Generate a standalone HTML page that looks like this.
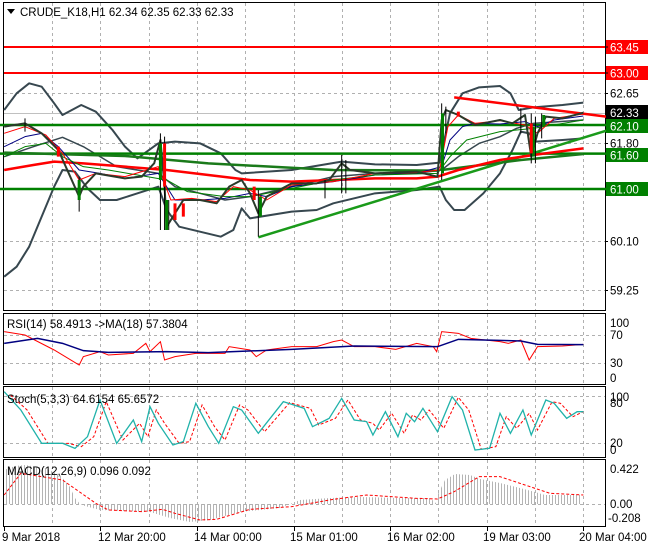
<!DOCTYPE html>
<html><head><meta charset="utf-8"><style>
body{margin:0;background:#fff;}
svg{display:block;font-family:"Liberation Sans",sans-serif;font-size:11px;}
</style></head><body>
<svg width="650" height="550" viewBox="0 0 650 550" xmlns="http://www.w3.org/2000/svg">
<defs>
<pattern id="hist" width="3" height="10" patternUnits="userSpaceOnUse"><rect x="0" y="0" width="1" height="10" fill="#b4b4b4"/></pattern>
</defs>
<rect width="650" height="550" fill="#fff"/>
<g fill="none" stroke="#000" stroke-width="1">
<rect x="3.5" y="2.5" width="602" height="308"/>
<rect x="3.5" y="313.5" width="602" height="71"/>
<rect x="3.5" y="386.5" width="602" height="71"/>
<rect x="3.5" y="459.5" width="602" height="67"/>
</g>
<g stroke="#b0b0b0" stroke-dasharray="3,3" stroke-width="1">
<path d="M52.5 3V310M100.5 3V310M149.5 3V310M197.5 3V310M245.5 3V310M294.5 3V310M342.5 3V310M390.5 3V310M438.5 3V310M487.5 3V310M535.5 3V310M583.5 3V310"/>
<path d="M52.5 314V384M100.5 314V384M149.5 314V384M197.5 314V384M245.5 314V384M294.5 314V384M342.5 314V384M390.5 314V384M438.5 314V384M487.5 314V384M535.5 314V384M583.5 314V384"/>
<path d="M52.5 387V457M100.5 387V457M149.5 387V457M197.5 387V457M245.5 387V457M294.5 387V457M342.5 387V457M390.5 387V457M438.5 387V457M487.5 387V457M535.5 387V457M583.5 387V457"/>
<path d="M52.5 460V526M100.5 460V526M149.5 460V526M197.5 460V526M245.5 460V526M294.5 460V526M342.5 460V526M390.5 460V526M438.5 460V526M487.5 460V526M535.5 460V526M583.5 460V526"/>
<path d="M4 93.5H605M4 143.5H605M4 241.5H605M4 290.5H605"/>
<path d="M4 335.5H605M4 363.5H605M4 396.5H605M4 443.5H605M4 504.5H605"/>
</g>
<line x1="4" y1="113.5" x2="605" y2="113.5" stroke="#c0c0c0"/>
<g transform="scale(0.41667,0.33333)" fill="none" stroke-linejoin="round">
<path vector-effect="non-scaling-stroke" stroke="#37474f" stroke-width="2" d="M10 330 L40 280 L70 250 L100 260 L130 310 L150 345 L195 315 L230 335 L270 390 L300 440 L330 475 L380 430 L420 425 L480 430 L530 460 L565 510 L580 520 L700 510 L820 485 L900 493 L1000 495 L1055 488 L1080 340 L1110 280 L1150 262 L1200 258 L1225 280 L1245 330 L1280 322 L1350 315 L1400 308"/>
<path vector-effect="non-scaling-stroke" stroke="#37474f" stroke-width="2" d="M10 830 L40 800 L70 740 L100 650 L130 560 L150 510 L180 515 L210 565 L240 600 L280 600 L330 580 L380 560 L400 630 L430 680 L480 695 L530 710 L560 690 L580 625 L600 655 L700 635 L760 630 L800 610 L900 580 L1000 570 L1055 560 L1070 600 L1090 630 L1115 630 L1160 580 L1200 520 L1230 450 L1250 395 L1270 400 L1285 425 L1350 420 L1400 415"/>
<path vector-effect="non-scaling-stroke" stroke="#37474f" stroke-width="1.5" d="M10 470 L80 440 L150 412 L200 440 L280 500 L380 520 L420 560 L480 580 L540 600 L600 590 L700 560 L800 530 L900 520 L1000 520 L1060 510 L1100 470 L1150 430 L1200 410 L1240 385 L1280 370 L1400 360"/>
<path vector-effect="non-scaling-stroke" stroke="#008000" stroke-width="2.5" d="M0 375H1460M0 461H1460M0 567H1460"/>
<path vector-effect="non-scaling-stroke" stroke="#1a7a1a" stroke-width="2.5" d="M10 458 L300 468 L500 490 L800 510 L1050 512"/>
<path vector-effect="non-scaling-stroke" stroke="#1a9a1a" stroke-width="2.5" d="M620 712 L1455 392"/>
<path vector-effect="non-scaling-stroke" stroke="#1a7a1a" stroke-width="2.5" d="M1060 510 L1250 480 L1400 462"/>
<path vector-effect="non-scaling-stroke" stroke="#ff0000" stroke-width="2.5" d="M10 510 L80 495 L130 485 L200 490 L300 500 L400 510 L500 525 L600 540 L700 545 L800 540 L900 535 L1000 535 L1050 530 L1100 510 L1200 480 L1280 465 L1400 445"/>
<path vector-effect="non-scaling-stroke" stroke="#ff0000" stroke-width="2.5" d="M1090 292 L1455 350"/>
<path vector-effect="non-scaling-stroke" stroke="#000080" stroke-width="1" d="M10 440 L60 410 L100 400 L140 440 L190 510 L240 520 L300 535 L380 520 L420 600 L480 600 L540 595 L600 580 L640 590 L700 560 L800 545 L900 525 L1000 520 L1060 500 L1080 420 L1110 380 L1140 370 L1200 372 L1260 365 L1290 380 L1330 360 L1400 348"/>
<path vector-effect="non-scaling-stroke" stroke="#008000" stroke-width="1" d="M10 470 L60 440 L110 430 L150 470 L200 500 L260 510 L330 525 L400 540 L450 575 L540 590 L600 590 L700 565 L800 540 L900 525 L1050 520 L1080 470 L1120 420 L1200 395 L1280 385 L1400 360"/>
<path vector-effect="non-scaling-stroke" stroke="#ff0000" stroke-width="1" d="M10 400 L60 380 L110 405 L150 460 L190 540 L230 520 L300 530 L380 500 L410 600 L460 595 L520 605 L560 560 L600 570 L640 600 L700 555 L800 545 L900 520 L1000 518 L1055 510 L1075 380 L1100 345 L1140 370 L1200 362 L1260 375 L1290 400 L1330 355 L1400 342"/>
<path vector-effect="non-scaling-stroke" stroke="#2a3a2a" stroke-width="2" d="M10 380 L60 370 L100 400 L140 450 L190 590 L200 560 L230 520 L300 535 L340 530 L370 490 L385 420 L395 560 L400 680 L420 640 L440 600 L480 600 L520 610 L550 560 L580 540 L600 580 L620 640 L640 590 L700 550 L760 550 L790 540 L820 490 L840 510 L900 520 L1000 515 L1050 530 L1060 360 L1070 330 L1100 345 L1140 375 L1200 360 L1230 370 L1260 345 L1275 470 L1290 400 L1310 350 L1350 355 L1400 338"/>
<path vector-effect="non-scaling-stroke" stroke="#000" stroke-width="1" d="M60 355V395M190 530V635M385 400V690M395 410V690M405 600V690M620 570V710M820 465V580M830 480V580M780 540V595M1060 310V540M1070 320V400M1250 325V400M1275 340V490M1285 350V490M1300 340V415"/>
<path vector-effect="non-scaling-stroke" stroke="#008000" stroke-width="3" d="M190 540V600M385 430V540M400 600V690M625 590V650M1062 340V520M1280 380V470M1305 345V380"/>
<path vector-effect="non-scaling-stroke" stroke="#ff0000" stroke-width="3" d="M140 440V470M395 430V560M420 610V660M440 610V650M610 560V600M1275 370V460M1100 335V350"/>
</g>
<path d="M4 47H605M4 73H605" stroke="#ff0000" stroke-width="2"/>
<g transform="translate(0,310) scale(0.41667,0.33333)" fill="none">
<path vector-effect="non-scaling-stroke" stroke="#ff0000" stroke-width="1" d="M10 65 L60 75 L130 120 L190 165 L200 140 L240 125 L260 135 L320 130 L350 100 L360 125 L385 95 L395 150 L420 140 L470 130 L540 130 L550 110 L600 120 L615 140 L640 120 L700 110 L760 110 L800 95 L820 90 L850 110 L900 110 L950 118 L1000 100 L1040 110 L1048 125 L1060 65 L1100 70 L1130 85 L1200 95 L1220 100 L1250 90 L1270 150 L1290 110 L1350 108 L1400 103"/>
<path vector-effect="non-scaling-stroke" stroke="#000080" stroke-width="1.5" d="M10 100 L90 85 L150 100 L200 122 L260 127 L400 125 L500 128 L700 118 L850 108 L1050 110 L1100 88 L1250 93 L1290 103 L1400 104"/>
</g>
<g transform="translate(0,310) scale(0.41667,0.33333)" fill="none">
<path vector-effect="non-scaling-stroke" stroke="#ff0000" stroke-width="1" stroke-dasharray="3,2" d="M25 255 L65 300 L115 400 L165 400 L195 410 L225 380 L255 275 L295 390 L335 340 L355 380 L375 300 L395 340 L430 400 L455 395 L485 285 L515 350 L540 390 L575 285 L595 300 L635 365 L695 278 L745 295 L765 345 L805 325 L835 270 L865 330 L895 340 L910 360 L940 310 L970 370 L990 315 L1010 330 L1030 300 L1065 355 L1100 262 L1125 300 L1155 418 L1190 410 L1215 320 L1240 355 L1270 310 L1290 360 L1325 275 L1345 280 L1375 320 L1400 305"/>
<path vector-effect="non-scaling-stroke" stroke="#20b2aa" stroke-width="1.3" d="M10 245 L50 300 L100 400 L150 400 L180 415 L210 380 L240 270 L280 400 L320 330 L340 395 L360 290 L380 340 L415 405 L440 395 L470 280 L500 350 L525 400 L560 290 L580 300 L620 370 L680 275 L730 295 L750 350 L790 325 L820 265 L850 330 L880 335 L895 375 L925 305 L955 380 L975 310 L995 335 L1015 295 L1050 365 L1085 260 L1110 300 L1140 420 L1175 415 L1200 310 L1225 370 L1255 300 L1275 375 L1310 270 L1330 280 L1360 325 L1385 305 L1400 305"/>
</g>
<polygon fill="url(#hist)" points="4,504 4,470 15,466 25,465 45,468 60,475 70,487 75,498 80,504 85,506 100,510 150,512 170,518 190,522 210,520 240,512 280,508 290,504 300,500 330,498 360,497 400,498 430,498 437,504 438,494 445,480 455,474 470,475 480,479 500,483 520,488 535,492 545,495 580,495 580,504"/>
<g transform="translate(0,310) scale(0.41667,0.33333)" fill="none">
<path vector-effect="non-scaling-stroke" stroke="#ff0000" stroke-width="1" stroke-dasharray="3,2" d="M10 555 L50 490 L150 510 L230 580 L260 600 L340 605 L390 598 L420 610 L480 630 L520 628 L600 598 L700 590 L800 568 L880 555 L1000 565 L1050 567 L1090 545 L1150 500 L1200 500 L1260 525 L1320 550 L1400 555"/>
</g>
<path d="M7 9h8l-4 5z" fill="#000"/>
<g font-size="11.5">
<text x="20" y="16">CRUDE_K18,H1  62.34 62.35 62.33 62.33</text>
<text x="7" y="328">RSI(14) 58.4913  -&gt;MA(18) 57.3804</text>
<text x="7" y="403">Stoch(5,3,3) 64.6154 65.6572</text>
<text x="7" y="475">MACD(12,26,9) 0.096 0.092</text>
</g>
<g font-size="11.5">
<rect x="606" y="40" width="42" height="14" fill="#ff0000"/><text x="610" y="51.5" fill="#fff">63.45</text>
<rect x="606" y="66" width="42" height="14" fill="#ff0000"/><text x="610" y="77.5" fill="#fff">63.00</text>
<text x="610" y="97.5">62.65</text>
<rect x="606" y="105" width="42" height="15" fill="#000"/><text x="610" y="117" fill="#fff">62.33</text>
<rect x="606" y="119" width="42" height="14" fill="#008000"/><text x="610" y="130.5" fill="#fff">62.10</text>
<text x="610" y="147.5">61.80</text>
<rect x="606" y="148" width="42" height="14" fill="#008000"/><text x="610" y="159.5" fill="#fff">61.60</text>
<rect x="606" y="182" width="42" height="14" fill="#008000"/><text x="610" y="193.5" fill="#fff">61.00</text>
<text x="610" y="245.5">60.10</text>
<text x="610" y="294.5">59.25</text>
<text x="610" y="327">100</text>
<text x="610" y="339">70</text>
<text x="610" y="367">30</text>
<text x="610" y="382">0</text>
<text x="610" y="401">100</text>
<text x="610" y="407">80</text>
<text x="610" y="447">20</text>
<text x="610" y="454">0</text>
<text x="610" y="473">0.422</text>
<text x="610" y="508">0.00</text>
<text x="608" y="522">-0.208</text>
</g>
<g stroke="#000"><path d="M605 47h3M605 73h3M605 93.5h3M605 143.5h3M605 241.5h3M605 290.5h3M4.5 527v4M100.5 527v4M197.5 527v4M294.5 527v4M390.5 527v4M487.5 527v4M583.5 527v4"/></g>
<g font-size="11.5">
<text x="2" y="541">9 Mar 2018</text>
<text x="98" y="541">12 Mar 20:00</text>
<text x="194" y="541">14 Mar 00:00</text>
<text x="290" y="541">15 Mar 01:00</text>
<text x="387" y="541">16 Mar 02:00</text>
<text x="483" y="541">19 Mar 03:00</text>
<text x="579" y="541">20 Mar 04:00</text>
</g>
</svg>
</body></html>
